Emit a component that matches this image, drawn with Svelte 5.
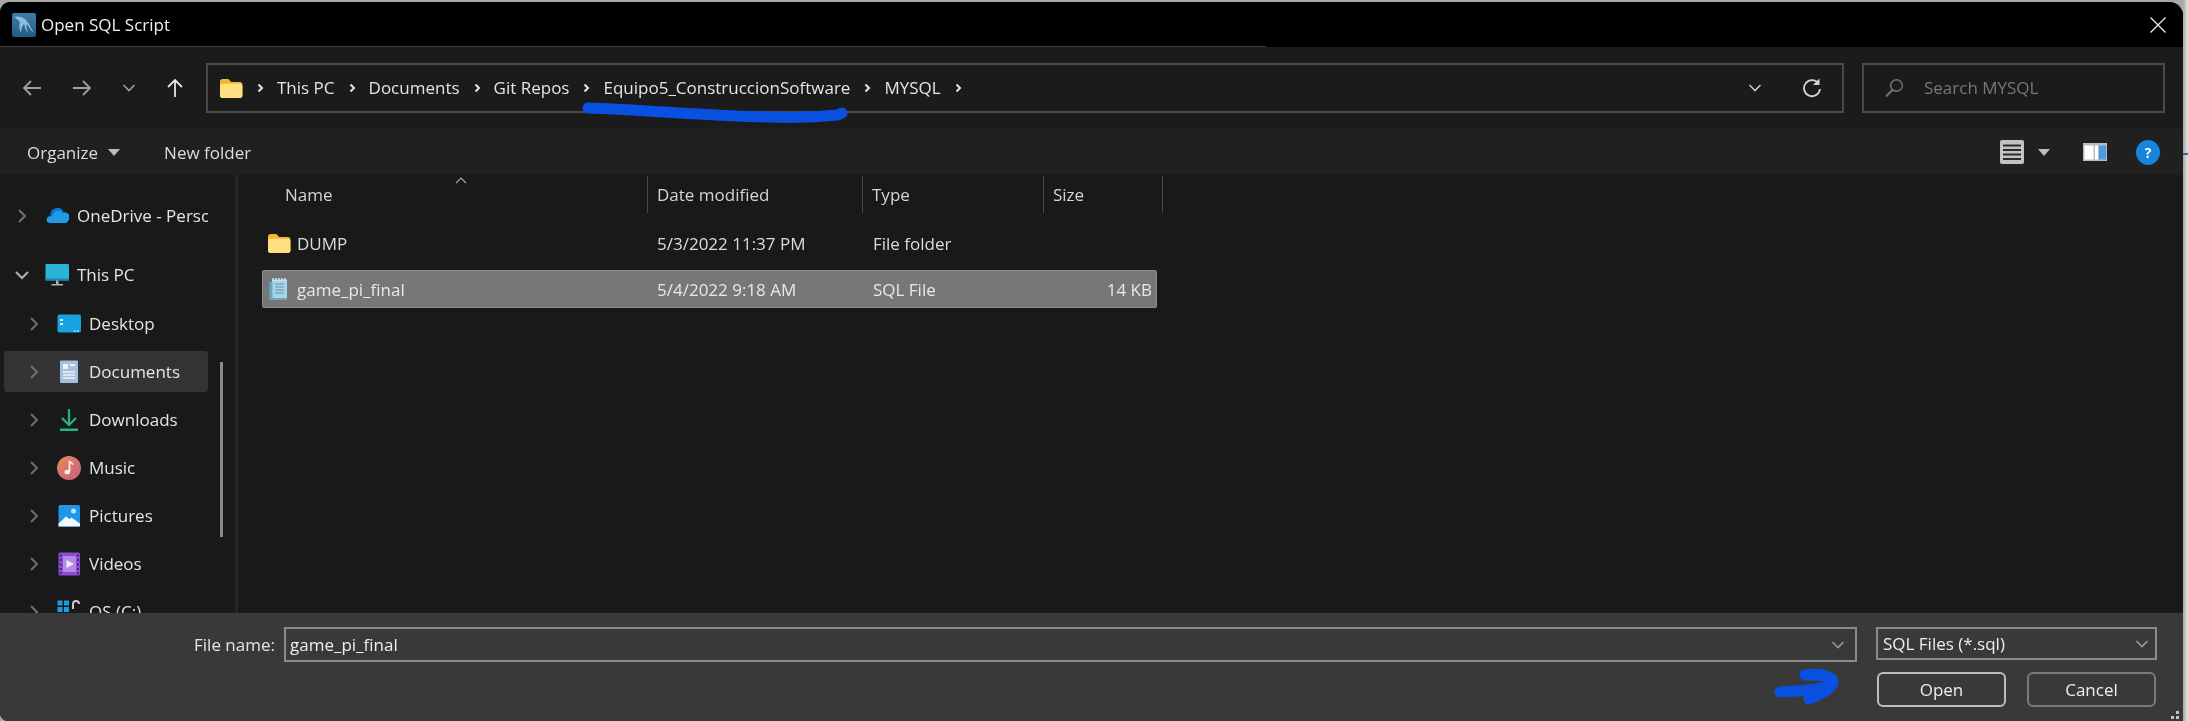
<script>
  const crumbs = ['This PC', 'Documents', 'Git Repos', 'Equipo5_ConstruccionSoftware', 'MYSQL'];

  const places = [
    { name: 'OneDrive - Personal', icon: 'cloud', depth: 0 },
    { name: 'This PC', icon: 'pc', depth: 0, open: true },
    { name: 'Desktop', icon: 'desktop', depth: 1 },
    { name: 'Documents', icon: 'docs', depth: 1, active: true },
    { name: 'Downloads', icon: 'down', depth: 1 },
    { name: 'Music', icon: 'music', depth: 1 },
    { name: 'Pictures', icon: 'pics', depth: 1 },
    { name: 'Videos', icon: 'videos', depth: 1 },
    { name: 'OS (C:)', icon: 'drive', depth: 1 }
  ];

  const files = [
    { name: 'DUMP', date: '5/3/2022 11:37 PM', type: 'File folder', size: '', icon: 'folder' },
    { name: 'game_pi_final', date: '5/4/2022 9:18 AM', type: 'SQL File', size: '14 KB', icon: 'sql', selected: true }
  ];
</script>

{#snippet chevronRight()}
  <svg class="crumb-sep" viewBox="0 0 8 12" width="8" height="12"><path d="M2.500 2.500 6 6 2.500 9.500" fill="none" stroke="#e4e4e4" stroke-width="2"/></svg>
{/snippet}

{#snippet chevronDown(color)}
  <svg viewBox="0 0 14 8" width="14" height="8"><path d="M1.500 1 7 6.500 12.500 1" fill="none" stroke={color} stroke-width="1.600"/></svg>
{/snippet}

{#snippet caret()}
  <svg viewBox="0 0 12 7" width="12" height="7"><path d="M0 0h12L6 7z" fill="#bdbdbd"/></svg>
{/snippet}

{#snippet fileIcon(kind)}
  <svg class="glyph" viewBox="0 0 24 24" width="24" height="24">
    {#if kind === 'folder'}
      <path d="M1 5.500C1 4 2 3 3.500 3h5.200c.8 0 1.300.3 1.800.9L12.200 6H21c1.400 0 2.400 1 2.400 2.400v11.100c0 1.400-1 2.400-2.400 2.400H3.400C2 21.900 1 20.900 1 19.500z" fill="#f2b632"/>
      <path d="M1 9.500C1 8.300 2 7.800 3.200 7.800H21c1.400 0 2.400 1 2.400 2.400v9.300c0 1.400-1 2.400-2.400 2.400H3.400C2 21.900 1 20.900 1 19.500z" fill="#ffdf80"/>
    {:else if kind === 'sql'}
      <path d="M5 2.500h15v18.500H5z" fill="#a9d4e8"/>
      <path d="M2.500 5h3v16h14v2H2.500z" fill="#6ba7c4"/>
      <path d="M8 7h9M8 10h9M8 13h9M8 16h9" stroke="#5f97b3" stroke-width="1"/>
      <path d="M6 1v3M9 1v3M12 1v3M15 1v3M18 1v3" stroke="#e8f2f7" stroke-width="1.200"/>
    {:else if kind === 'cloud'}
      <path d="M5.500 12a7 7 0 0 1 13-4.500L12 16H3.500A4 4 0 0 1 5.500 12z" fill="#0a74c9"/>
      <path d="M18 8.500a5 5 0 0 1 5.800 7.500c-.6 1.500-1.800 3-3.800 3H4.500A3.500 3.500 0 0 1 1.500 16a4 4 0 0 1 6-3.500 6 6 0 0 1 10.500-4z" fill="#1e9be8"/>
    {:else if kind === 'pc'}
      <rect x="0.500" y="1" width="23.500" height="16.500" rx="1.200" fill="#29b4d8"/>
      <rect x="0.500" y="15.500" width="23.500" height="2" fill="#2380b0"/>
      <path d="M11 17.500h2.500v3.500H11zM6.500 21h11.500v1.500H6.500z" fill="#aab4bc"/>
    {:else if kind === 'desktop'}
      <rect x="0.500" y="2.500" width="23.500" height="18" rx="2" fill="#17a3df"/>
      <rect x="3" y="7" width="3" height="2" fill="#e4f6ff"/>
      <rect x="3" y="11" width="3" height="2" fill="#e4f6ff"/>
      <rect x="17" y="18.500" width="1.500" height="1.300" fill="#e4f6ff"/>
      <rect x="20" y="18.500" width="1.500" height="1.300" fill="#e4f6ff"/>
    {:else if kind === 'docs'}
      <rect x="3" y="0.500" width="18" height="22.500" rx="1" fill="#a6bfdd"/>
      <rect x="6" y="4" width="5" height="5" fill="#eef3f9"/>
      <rect x="13" y="4" width="5" height="2" fill="#eef3f9"/>
      <path d="M6 12h12M6 15h12M6 18h12" stroke="#eef3f9" stroke-width="1.500"/>
    {:else if kind === 'down'}
      <path d="M12 1v15M5 10l7 7 7-7" fill="none" stroke="#22b585" stroke-width="2.200"/>
      <rect x="3" y="20.500" width="18" height="2.500" fill="#22b585"/>
    {:else if kind === 'music'}
      <defs><linearGradient id="mus" x1="0" y1="0" x2="1" y2="1"><stop offset="0" stop-color="#ea8a55"/><stop offset="1" stop-color="#c45e84"/></linearGradient></defs>
      <circle cx="12" cy="12" r="12" fill="url(#mus)"/>
      <path d="M12.500 5v10.500" stroke="#fbeee8" stroke-width="1.800"/>
      <path d="M12.500 5c1 1.800 3 2.200 3.800 3.500" fill="none" stroke="#fbeee8" stroke-width="1.500"/>
      <ellipse cx="10.300" cy="16" rx="2.800" ry="2.300" fill="#fbeee8"/>
    {:else if kind === 'pics'}
      <rect x="1.500" y="1" width="21.500" height="21.500" rx="1.500" fill="#1f96e8"/>
      <path d="M1.500 22.500v-3L9 12.500l3.500 2.500 2-1.500 8.500 6v3z" fill="#f1f8fd"/>
      <circle cx="16.500" cy="7" r="2.500" fill="#bfe4fb"/>
    {:else if kind === 'videos'}
      <rect x="1.500" y="0.500" width="21.500" height="23" rx="1.500" fill="#8d4bd8"/>
      <rect x="6" y="4" width="13" height="16" fill="#b18ae6"/>
      <path d="M9.500 8 17 12l-7.500 4z" fill="#f2ebfb"/>
      <path d="M2.800 3.500h1.800M2.800 8h1.800M2.800 12.500h1.800M2.800 17h1.800M2.800 21h1.800M20 3.500h1.800M20 8h1.800M20 12.500h1.800M20 17h1.800M20 21h1.800" stroke="#2c1a4a" stroke-width="1.600"/>
    {:else if kind === 'drive'}
      <rect x="0.500" y="0.500" width="5" height="5" fill="#1b9be6"/>
      <rect x="7" y="0.500" width="5" height="5" fill="#1b9be6"/>
      <rect x="0.500" y="7" width="5" height="5" fill="#1b9be6"/>
      <rect x="7" y="7" width="5" height="5" fill="#1b9be6"/>
      <path d="M16 9V4a3 3 0 0 1 6 0" fill="none" stroke="#c9c9c9" stroke-width="2"/>
      <rect x="0.500" y="13" width="23" height="9" rx="1" fill="#c4c4c4"/>
    {/if}
  </svg>
{/snippet}

<div class="screen">
  <div class="window">
    <header class="titlebar">
      <svg class="app-logo" viewBox="0 0 24 24" width="24" height="24">
        <defs><linearGradient id="lg" x1="0" y1="0" x2="0" y2="1"><stop offset="0" stop-color="#3f7ea6"/><stop offset="1" stop-color="#1d5c86"/></linearGradient></defs>
        <rect width="24" height="24" rx="2" fill="url(#lg)"/>
        <path d="M2 4c6-2 12 1 15 7 1.500 3 3 6 5 9-3-2-5-6-7-9-1 3 0 6 1 9-3-3-3-7-4-9-2 2-3 5-3 9-2-4-2-8-1-11C6 7 4 5 2 4z" fill="#8fbdd6"/>
      </svg>
      <span>Open SQL Script</span>
      <svg class="close" viewBox="0 0 16 16" width="16" height="16"><path d="M.5.500l15 15M15.500.500l-15 15" stroke="#f2f2f2" stroke-width="1.200"/></svg>
    </header>

    <nav class="navbar">
      <div class="nav-buttons">
        <svg viewBox="0 0 20 18" width="20" height="18"><path d="M19 9H2M9 2 2 9l7 7" fill="none" stroke="#a0a0a0" stroke-width="1.800"/></svg>
        <svg viewBox="0 0 20 18" width="20" height="18"><path d="M1 9h17M11 2l7 7-7 7" fill="none" stroke="#a0a0a0" stroke-width="1.800"/></svg>
        {@render chevronDown('#a0a0a0')}
        <svg viewBox="0 0 18 20" width="18" height="20"><path d="M9 19V2M2 9l7-7 7 7" fill="none" stroke="#e6e6e6" stroke-width="1.800"/></svg>
      </div>
      <div class="address">
        {@render fileIcon('folder')}
        {@render chevronRight()}
        {#each crumbs as crumb}
          <span class="nudge">{crumb}</span>
          {@render chevronRight()}
        {/each}
        <div class="address-tools">
          {@render chevronDown('#c4c4c4')}
          <svg viewBox="0 0 20 20" width="20" height="20"><path d="M16.500 5.500A8 8 0 1 0 18 11" fill="none" stroke="#d4d4d4" stroke-width="1.800"/><path d="M17.500 .5v6.500h-6.500z" fill="#d4d4d4"/></svg>
        </div>
      </div>
      <div class="search">
        <svg viewBox="0 0 20 20" width="20" height="20"><circle cx="12.500" cy="7.500" r="5.800" fill="none" stroke="#777" stroke-width="1.400"/><path d="M8.500 12 2 18.500" stroke="#777" stroke-width="1.800"/></svg>
        <span class="nudge">Search MYSQL</span>
      </div>
    </nav>

    <div class="toolbar">
      <span class="tool">Organize {@render caret()}</span>
      <span class="tool">New folder</span>
      <div class="view-tools">
        <svg viewBox="0 0 24 24" width="24" height="24"><rect width="24" height="24" rx="2" fill="#c2c2c2"/><path d="M3 5.500h18M3 10h18M3 14.500h18M3 19h18" stroke="#2a2a2a" stroke-width="1.800"/></svg>
        {@render caret()}
        <svg class="pane-icon" viewBox="0 0 24 18" width="24" height="18"><rect width="24" height="18" fill="#bcbcbc"/><rect x="1.500" y="2.500" width="9" height="14" fill="#fff"/><rect x="12" y="2.500" width="3" height="14" fill="#fff"/><rect x="16" y="2.500" width="7" height="14" fill="#4a9ae6"/></svg>
        <span class="help">?</span>
      </div>
    </div>

    <div class="body">
      <aside class="sidebar">
        {#each places as place}
          <div class="place" class:active={place.active} class:depth1={place.depth === 1} class:open={place.open}>
            <svg class="expander" viewBox="0 0 14 14" width="14" height="14">
              {#if place.open}
                <path d="M1 4l6 6 6-6" fill="none" stroke="#b0b0b0" stroke-width="2"/>
              {:else}
                <path d="M4 1l6 6-6 6" fill="none" stroke="#707070" stroke-width="2"/>
              {/if}
            </svg>
            {@render fileIcon(place.icon)}
            <span class="place-name">{place.name}</span>
          </div>
        {/each}
        <div class="scrollbar"></div>
      </aside>

      <main class="pane">
        <div class="columns">
          <span class="name-col">Name</span>
          <span>Date modified</span>
          <span>Type</span>
          <span>Size</span>
          <svg class="sort" viewBox="0 0 12 7" width="12" height="7"><path d="M1 6l5-5 5 5" fill="none" stroke="#a8a8a8" stroke-width="1.200"/></svg>
        </div>
        {#each files as file}
          <div class="file" class:selected={file.selected}>
            <span class="file-name">{@render fileIcon(file.icon)}{file.name}</span>
            <span>{file.date}</span>
            <span class="file-type">{file.type}</span>
            <span class="file-size">{file.size}</span>
          </div>
        {/each}
      </main>
    </div>

    <footer class="footer">
      <div class="footer-row">
        <label class="file-label" for="fname">File name:</label>
        <div class="name-input">
          <input id="fname" value="game_pi_final" />
          {@render chevronDown('#9a9a9a')}
        </div>
        <div class="filter">
          <span>SQL Files (*.sql)</span>
          {@render chevronDown('#9a9a9a')}
        </div>
      </div>
      <div class="actions">
        <button class="primary">Open</button>
        <button>Cancel</button>
      </div>
      <svg class="grip" viewBox="0 0 10 10" width="10" height="10"><path d="M5 0h3v3H5zM0 5h3v3H0zM5 5h3v3H5z" fill="#c4c4c4"/></svg>
    </footer>
  </div>
  <div class="outside"><span class="tick"></span></div>

  <!-- hand-drawn marks on top of the screenshot -->
  <svg class="marks" viewBox="0 0 2188 721" width="2188" height="721">
    <path d="M588 108c60 2 120 8 180 9 25 1 50 0 70-2l4-2" fill="none" stroke="#0a50e0" stroke-width="11" stroke-linecap="round"/>
    <path d="M1780 692c15-1 35-1 50-6 5-2 2-8-6-10-6-1-15-1-19-1 15-2 28 1 28 7 0 6-15 14-24 17" fill="none" stroke="#0a50e0" stroke-width="11" stroke-linecap="round" stroke-linejoin="round"/>
  </svg>
</div>

<style>
  :global(body) {
    margin: 0;
    background: #fff;
  }

  .screen {
    position: relative;
    display: flex;
    height: 721px;
    padding-top: 2px;
    box-sizing: border-box;
    background: #a8a8a8;
    overflow: hidden;
    font-family: "Open Sans", "Noto Sans", sans-serif;
    font-size: 17px;
    color: #e4e4e4;
    filter: blur(0.4px);
  }

  .window {
    display: flex;
    flex-direction: column;
    width: 2183px;
    flex: none;
    border-radius: 10px 14px 0 8px;
    overflow: hidden;
    background: #191919;
  }

  .outside {
    position: relative;
    flex: 1;
    margin-top: -2px;
    background: linear-gradient(90deg, #a8a8a8, #e6e6e6);
  }

  .tick {
    position: absolute;
    left: 0;
    top: 153px;
    width: 100%;
    height: 2px;
    background: #2a6ea8;
  }

  .marks {
    position: absolute;
    inset: 0;
    pointer-events: none;
  }

  .glyph {
    flex: none;
  }

  .titlebar {
    flex: none;
    height: 45px;
    display: flex;
    align-items: center;
    gap: 5px;
    padding: 0 17px 0 12px;
    background: #000;
    color: #f0f0f0;
    position: relative;
  }

  .titlebar::after {
    content: '';
    position: absolute;
    left: 0;
    bottom: 0;
    width: 1266px;
    height: 1px;
    background: #3c3c3c;
  }

  .close {
    margin-left: auto;
  }

  .navbar {
    flex: none;
    height: 82px;
    display: flex;
    align-items: center;
    box-sizing: border-box;
    padding: 0 18px 0 0;
    background: #1b1b1b;
  }

  .nav-buttons {
    width: 206px;
    flex: none;
    box-sizing: border-box;
    display: flex;
    align-items: center;
    gap: 30px;
    padding-left: 22px;
  }

  .address,
  .search {
    height: 50px;
    box-sizing: border-box;
    border: 2px solid #4b4b4b;
    display: flex;
    align-items: center;
  }

  .address {
    width: 1638px;
    flex: none;
    padding-left: 11px;
    gap: 13px;
  }

  .nudge {
    margin-bottom: 2px;
  }

  .crumb-sep {
    flex: none;
  }

  .address-tools {
    margin-left: auto;
    display: flex;
    align-items: center;
    gap: 40px;
    padding-right: 20px;
  }

  .search {
    width: 303px;
    flex: none;
    margin-left: 18px;
    padding-left: 20px;
    gap: 20px;
    color: #777;
  }

  .toolbar {
    flex: none;
    height: 46px;
    display: flex;
    align-items: center;
    gap: 44px;
    padding: 0 23px 0 27px;
    background: #202020;
  }

  .tool {
    display: flex;
    align-items: center;
    gap: 10px;
    color: #dcdcdc;
  }

  .view-tools {
    margin-left: auto;
    display: flex;
    align-items: center;
    gap: 14px;
  }

  .pane-icon {
    margin-left: 19px;
    margin-right: 15px;
  }

  .help {
    width: 24px;
    height: 25px;
    border-radius: 50%;
    background: #1585de;
    color: #fff;
    font-size: 14px;
    font-weight: 700;
    display: grid;
    place-items: center;
  }

  .body {
    flex: 1;
    min-height: 0;
    display: flex;
    overflow: hidden;
  }

  .sidebar {
    position: relative;
    flex: none;
    width: 238px;
    box-sizing: border-box;
    padding: 20px 0 0 4px;
    border-right: 3px solid #262626;
    display: flex;
    flex-direction: column;
    gap: 7px;
  }

  .place {
    flex: none;
    width: 204px;
    height: 41px;
    box-sizing: border-box;
    padding-left: 11px;
    display: flex;
    align-items: center;
    border-radius: 3px;
    overflow: hidden;
    white-space: nowrap;
  }

  .place.depth1 {
    padding-left: 23px;
  }

  .place.open {
    margin-top: 11px;
  }

  .place.open + .place {
    margin-top: 1px;
  }

  .place.active {
    background: #333;
  }

  .expander {
    flex: none;
    margin-right: 16px;
  }

  .place-name {
    margin-left: 8px;
  }

  .scrollbar {
    position: absolute;
    left: 220px;
    top: 187px;
    width: 3px;
    height: 175px;
    background: #8a8a8a;
  }

  .pane {
    flex: 1;
    padding: 1px 0 0 24px;
  }

  .columns {
    position: relative;
    display: grid;
    grid-template-columns: 386px 215px 181px 119px;
    width: 901px;
    height: 37px;
    margin-bottom: 11px;
    color: #d4d4d4;
  }

  .columns span {
    display: flex;
    align-items: center;
    padding-left: 9px;
    border-right: 1px solid #4a4a4a;
  }

  .columns .name-col {
    padding-left: 23px;
  }

  .sort {
    position: absolute;
    left: 193px;
    top: 1px;
  }

  .file {
    display: grid;
    grid-template-columns: 386px 215px 181px 113px;
    width: 895px;
    height: 38px;
    box-sizing: border-box;
    margin-bottom: 8px;
    align-items: center;
    border: 1px solid transparent;
    color: #dcdcdc;
  }

  .file > span {
    padding-left: 8px;
  }

  .file.selected {
    background: #777;
    border-color: #8c8c8c;
    border-radius: 2px;
    color: #e8e8e8;
  }

  .file .file-name {
    display: flex;
    align-items: center;
    gap: 6px;
    padding-left: 4px;
  }

  .file .file-type {
    padding-left: 9px;
  }

  .file .file-size {
    padding: 0 6px 0 0;
    text-align: right;
  }

  .footer {
    position: relative;
    flex: none;
    height: 108px;
    box-sizing: border-box;
    padding-top: 14px;
    background: #393939;
  }

  .footer-row {
    display: flex;
    align-items: flex-start;
  }

  .file-label {
    width: 275px;
    flex: none;
    text-align: right;
    line-height: 35px;
  }

  .name-input {
    width: 1573px;
    flex: none;
    height: 35px;
    box-sizing: border-box;
    margin-left: 9px;
    border: 2px solid #8a8a8a;
    display: flex;
    align-items: center;
    padding-right: 10px;
  }

  input {
    flex: 1;
    min-width: 0;
    border: 0;
    outline: 0;
    background: none;
    padding: 0 0 0 4px;
    color: #eee;
    font: inherit;
  }

  .filter {
    width: 281px;
    flex: none;
    height: 33px;
    box-sizing: border-box;
    margin-left: 19px;
    border: 2px solid #8a8a8a;
    display: flex;
    align-items: center;
    justify-content: space-between;
    padding: 0 6px 0 5px;
    color: #eee;
  }

  .actions {
    display: flex;
    gap: 21px;
    margin: 10px 0 0 1877px;
  }

  button {
    width: 129px;
    height: 35px;
    box-sizing: border-box;
    background: none;
    border: 2px solid #7a7a7a;
    border-radius: 6px;
    color: #eee;
    font: inherit;
    padding: 0;
  }

  button.primary {
    border-color: #bdbdbd;
  }

  .grip {
    position: absolute;
    right: 2px;
    bottom: 0;
  }
</style>
